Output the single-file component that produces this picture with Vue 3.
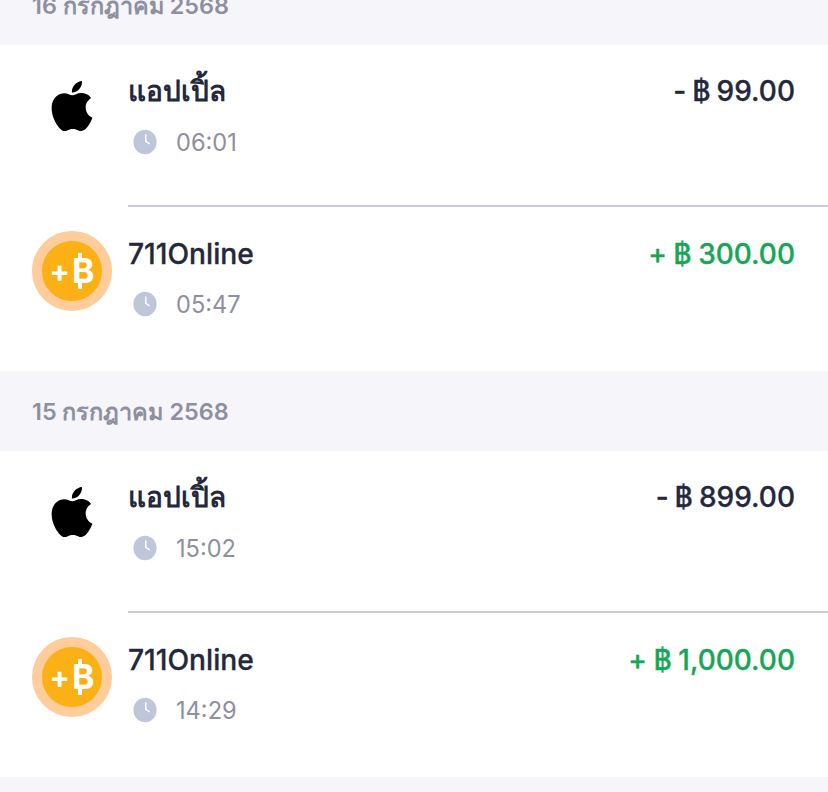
<script setup>
const groups = [
  { date: '16 กรกฎาคม 2568', items: [
    { kind: 'apple', name: 'แอปเปิ้ล', time: '06:01', amount: '- ฿ 99.00' },
    { kind: 'topup', name: '711Online', time: '05:47', amount: '+ ฿ 300.00' },
  ]},
  { date: '15 กรกฎาคม 2568', items: [
    { kind: 'apple', name: 'แอปเปิ้ล', time: '15:02', amount: '- ฿ 899.00' },
    { kind: 'topup', name: '711Online', time: '14:29', amount: '+ ฿ 1,000.00' },
  ]},
]
</script>

<template>
  <div class="page">
    <section v-for="g in groups" :key="g.date">
      <h2 class="date">{{ g.date }}</h2>
      <ul class="list">
        <li v-for="(t, i) in g.items" :key="i" class="row" :class="t.kind">
          <div class="icon">
            <svg v-if="t.kind === 'apple'" class="apple-logo" viewBox="0 0 24 24" width="50" height="50">
              <path fill="#000" d="M12.152 6.896c-.948 0-2.415-1.078-3.96-1.04-2.04.027-3.91 1.183-4.961 3.014-2.117 3.675-.546 9.103 1.519 12.09 1.013 1.454 2.208 3.09 3.792 3.039 1.52-.065 2.09-.987 3.935-.987 1.831 0 2.35.987 3.96.948 1.637-.026 2.676-1.48 3.676-2.948 1.156-1.688 1.636-3.325 1.662-3.415-.039-.013-3.182-1.221-3.22-4.857-.026-3.04 2.48-4.494 2.597-4.559-1.429-2.09-3.623-2.324-4.39-2.376-2-.156-3.675 1.09-4.61 1.09zM15.53 3.83c.843-1.012 1.4-2.427 1.245-3.83-1.207.052-2.662.805-3.532 1.818-.78.896-1.454 2.338-1.273 3.714 1.338.104 2.715-.688 3.559-1.701"/>
            </svg>
            <div v-else class="coin"><span class="plus">+</span><span class="baht">B</span></div>
          </div>
          <div class="body">
            <div class="top">
              <span class="name">{{ t.name }}</span>
              <span class="amount">{{ t.amount }}</span>
            </div>
            <div class="meta">
              <svg viewBox="0 0 26 26" width="26" height="26">
                <ellipse cx="13" cy="13" rx="11.6" ry="12.2" fill="#c0c6d9"/>
                <path d="M13.8 5.9V12.4L17.2 14.7" fill="none" stroke="#fff" stroke-width="1.4" stroke-linecap="round" stroke-linejoin="round"/>
              </svg>
              <span class="time">{{ t.time }}</span>
            </div>
          </div>
        </li>
      </ul>
    </section>
  </div>
</template>

<style scoped>
.page {
  margin-top: -35px;
  font-family: Inter, "Noto Sans", "DejaVu Sans", sans-serif;
  background: #f5f5fa;
  padding-bottom: 15px;
}
.date {
  margin: 0;
  height: 80px;
  padding: 1px 0 0 32px;
  box-sizing: border-box;
  display: flex;
  align-items: center;
  font-size: 23.4px;
  font-weight: 600;
  color: #8e8f9f;
}
.list {
  margin: 0;
  padding: 0;
  list-style: none;
  background: #fff;
}
.row {
  display: flex;
  padding-left: 32px;
}
.icon {
  width: 80px;
  height: 80px;
  flex: none;
  margin-right: 16px;
  margin-top: 21px;
  display: flex;
  align-items: center;
  justify-content: center;
}
.row + .row .icon {
  margin-top: 26px;
}
.coin {
  width: 60px;
  height: 60px;
  border-radius: 50%;
  background: #fbb116;
  border: 10px solid #ffcd9b;
  display: flex;
  align-items: center;
  justify-content: center;
  color: #fff;
  font-weight: 700;
  flex: none;
}
.plus {
  font-size: 30px;
  line-height: 1;
  margin-right: 2px;
}
.baht {
  position: relative;
  font-size: 34px;
  line-height: 1;
}
.baht::before,
.baht::after {
  content: "";
  position: absolute;
  left: 6px;
  width: 4px;
  height: 6px;
  background: #fff;
}
.baht::before { top: -1px; }
.baht::after { bottom: -1px; }
.body {
  flex: 1;
  min-width: 0;
  box-sizing: border-box;
  height: 160px;
  padding: 27px 33px 0 0;
}
.row + .row .body {
  height: 166px;
  padding-top: 28px;
  border-top: 2px solid #c7cbdc;
}
.top {
  display: flex;
  justify-content: space-between;
  align-items: center;
  height: 38px;
  white-space: nowrap;
}
.name, .amount {
  font-size: 28px;
  font-weight: 500;
  color: #23283c;
  -webkit-text-stroke: 0.3px currentColor;
}
.apple .name {
  font-weight: 600;
  -webkit-text-stroke: 0;
}
.topup .name {
  font-size: 28.2px;
}
.amount {
  word-spacing: -1px;
}
.apple .amount {
  font-weight: 500;
  -webkit-text-stroke: 0.3px currentColor;
  word-spacing: -1.5px;
}
.topup .amount {
  color: #17a655;
}
.meta {
  display: flex;
  align-items: center;
  margin-top: 19px;
  padding-left: 4px;
  height: 26px;
}
.row + .row .meta {
  margin-top: 18px;
}
.time {
  margin-left: 18px;
  font-size: 23.6px;
  color: #8e8f9f;
}
</style>
